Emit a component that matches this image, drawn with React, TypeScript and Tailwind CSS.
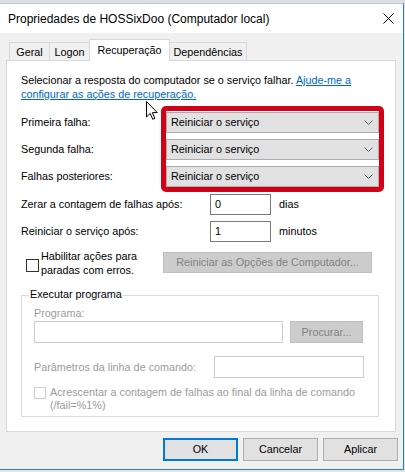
import React from 'react';

const font = { fontFamily: '"Liberation Sans", Arial, sans-serif' };

const Chevron: React.FC = () => (
    <svg width="9" height="5" viewBox="0 0 9 5" className="shrink-0">
        <path d="M0.5 0.5 L4.5 4.5 L8.5 0.5" fill="none" stroke="#606060" strokeWidth="1" />
    </svg>
);

const Combo: React.FC<{ value: string }> = ({ value }) => (
    <div className="h-[21px] bg-[#e1e1e1] border border-[#adadad] flex items-center justify-between pl-[4px] pr-[5px]">
        <span>{value}</span>
        <Chevron />
    </div>
);

const Tab: React.FC<{ label: string; width: string; active?: boolean }> = ({ label, width, active }) =>
    active ? (
        <div className={`${width} h-[22px] -mb-px -ml-px relative z-10 bg-white border border-b-0 border-[#d9d9d9] flex items-start justify-center pt-[5px]`}>
            {label}
        </div>
    ) : (
        <div className={`${width} h-[18px] -ml-px bg-[#f0f0f0] border border-b-0 border-[#d9d9d9] flex items-center justify-center pt-[2px]`}>
            {label}
        </div>
    );

const Button: React.FC<{ label: string; primary?: boolean }> = ({ label, primary }) => (
    <div
        className={`w-[75px] h-[23px] bg-[#e1e1e1] flex items-center justify-center ${
            primary ? 'border-2 border-[#0078d7]' : 'border border-[#adadad]'
        }`}
    >
        {label}
    </div>
);

const Cursor: React.FC = () => (
    <svg width="12" height="19" viewBox="0 0 12 19" className="absolute left-[146px] top-[101px]">
        <path d="M0.5 0.5 L0.5 16 L4.2 12.4 L6.8 18.3 L8.9 17.4 L6.4 11.6 L11.3 11.6 Z" fill="#fff" stroke="#000" strokeWidth="1" strokeLinejoin="round" />
    </svg>
);

const App: React.FC = () => {
    return (
        <div className="relative w-[405px] h-[472px] bg-[#e4e4e4] text-[10.8px] text-black leading-none" style={font}>
            <div className="h-[3px] bg-[#dedede]" />
            <div className="w-[404px] h-[467px] bg-[#f0f0f0] border-t border-r border-b border-t-[#a9c9ea] border-r-[#1883d7] border-b-[#1883d7] flex flex-col">
                {/* title bar */}
                <div className="h-[29px] bg-white flex items-center justify-between pl-[8px] pr-[9px] shrink-0">
                    <span className="text-[12px]">Propriedades de HOSSixDoo (Computador local)</span>
                    <svg width="11" height="11" viewBox="0 0 11 11">
                        <path d="M0.5 0.5 L10.5 10.5 M10.5 0.5 L0.5 10.5" stroke="#000" strokeWidth="1" />
                    </svg>
                </div>

                <div className="px-[6px] flex flex-col">
                    {/* tabs */}
                    <div className="h-[21px] mt-[6px] flex items-end pl-[4px]">
                        <Tab label="Geral" width="w-[41px]" />
                        <Tab label="Logon" width="w-[41px]" />
                        <Tab label="Recuperação" width="w-[81px]" active />
                        <Tab label="Dependências" width="w-[78px]" />
                    </div>

                    {/* panel */}
                    <div className="w-[390px] h-[372px] bg-white border border-[#d9d9d9] pl-[14px] flex flex-col">
                        <p className="mt-[12px] leading-[14px]">
                            Selecionar a resposta do computador se o serviço falhar.{' '}
                            <span className="text-[#0066cc] underline">Ajude-me a</span>
                            <br />
                            <span className="text-[#0066cc] underline">configurar as ações de recuperação.</span>
                        </p>

                        <div className="mt-[5px] flex">
                            <div className="w-[140px] pt-[6px] flex flex-col gap-[6px]">
                                <div className="h-[21px] flex items-center">Primeira falha:</div>
                                <div className="h-[21px] flex items-center">Segunda falha:</div>
                                <div className="h-[21px] flex items-center">Falhas posteriores:</div>
                            </div>
                            <div className="w-[223px] border-[5px] border-[#d3001a] rounded-[5px] bg-white pt-px flex flex-col gap-[6px]">
                                <Combo value="Reiniciar o serviço" />
                                <Combo value="Reiniciar o serviço" />
                                <Combo value="Reiniciar o serviço" />
                            </div>
                        </div>

                        <div className="mt-[2px] flex items-center">
                            <div className="w-[189px]">Zerar a contagem de falhas após:</div>
                            <div className="w-[61px] h-[21px] border border-[#7a7a7a] flex items-center pl-[4px]">0</div>
                            <div className="ml-[8px]">dias</div>
                        </div>
                        <div className="mt-[6px] flex items-center">
                            <div className="w-[189px]">Reiniciar o serviço após:</div>
                            <div className="w-[61px] h-[21px] border border-[#7a7a7a] flex items-center pl-[4px]">1</div>
                            <div className="ml-[8px]">minutos</div>
                        </div>

                        <div className="mt-[7px] flex items-start">
                            <div className="w-[142px] flex items-start">
                                <div className="ml-[5px] mt-[10px] w-[13px] h-[13px] border border-[#333] bg-white shrink-0" />
                                <div className="ml-[2px] leading-[14px]">
                                    Habilitar ações para
                                    <br />
                                    paradas com erros.
                                </div>
                            </div>
                            <div className="mt-[3px] w-[209px] h-[21px] bg-[#cccccc] border border-[#bfbfbf] text-[#838383] flex items-center justify-center">
                                Reiniciar as Opções de Computador...
                            </div>
                        </div>

                        {/* group box */}
                        <div className="relative mt-[18px] w-[358px] h-[122px] border border-[#dcdcdc] pl-[12px] flex flex-col">
                            <span className="absolute -top-[7px] left-[7px] bg-white px-[1px]">Executar programa</span>
                            <div className="mt-[10px] leading-[14px] text-[#9b9b9b]">Programa:</div>
                            <div className="mt-[1px] flex">
                                <div className="w-[249px] h-[22px] border border-[#cccccc] bg-white" />
                                <div className="ml-[7px] w-[73px] h-[22px] bg-[#cccccc] border border-[#bfbfbf] text-[#838383] flex items-center justify-center">
                                    Procurar...
                                </div>
                            </div>
                            <div className="mt-[13px] flex items-center">
                                <div className="w-[180px] text-[#9b9b9b]">Parâmetros da linha de comando:</div>
                                <div className="w-[150px] h-[22px] border border-[#cccccc] bg-white" />
                            </div>
                            <div className="mt-[8px] flex items-start">
                                <div className="mt-[1px] w-[12px] h-[12px] border border-[#cccccc] bg-white shrink-0" />
                                <div className="ml-[4px] leading-[13px] text-[#9b9b9b]">
                                    Acrescentar a contagem de falhas ao final da linha de comando
                                    <br />
                                    (/fail=%1%)
                                </div>
                            </div>
                        </div>
                    </div>

                    {/* dialog buttons */}
                    <div className="mt-[6px] flex justify-end gap-[5px] mr-[-1px]">
                        <Button label="OK" primary />
                        <Button label="Cancelar" />
                        <Button label="Aplicar" />
                    </div>
                </div>
            </div>
            <Cursor />
        </div>
    );
};

export default App;
